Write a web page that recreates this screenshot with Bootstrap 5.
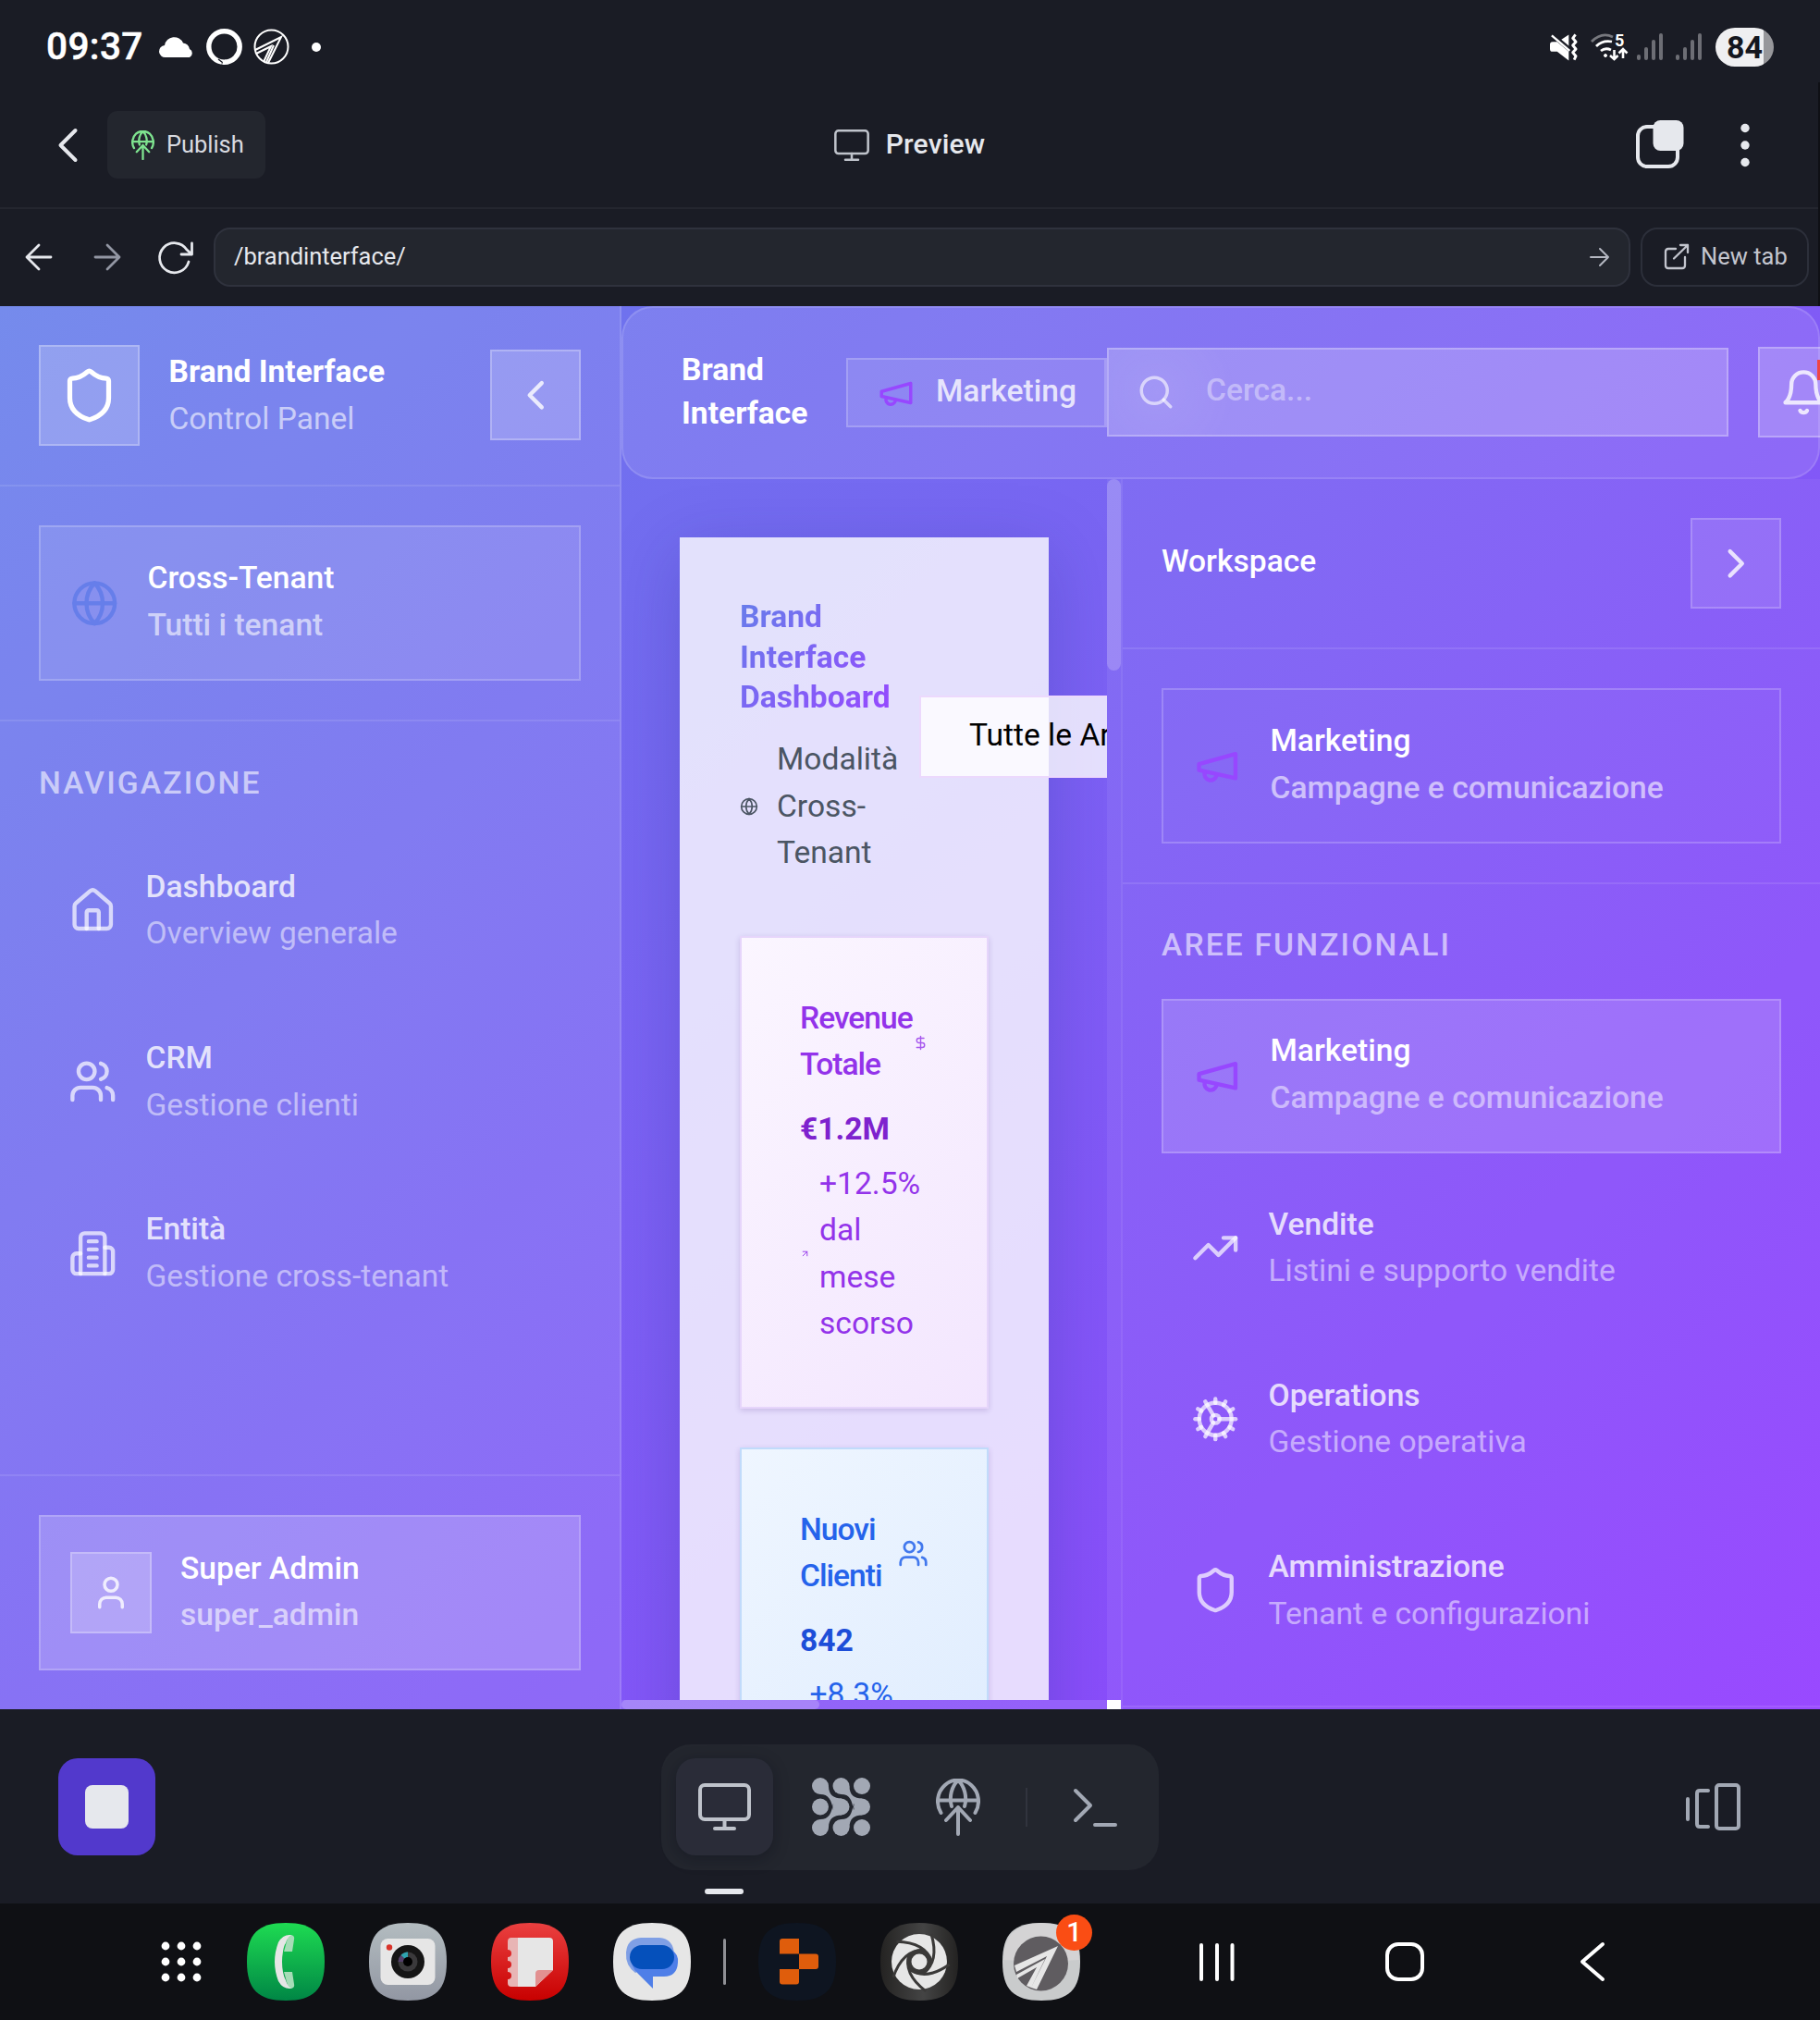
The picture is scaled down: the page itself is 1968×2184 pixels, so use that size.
<!DOCTYPE html>
<html lang="it">
<head>
<meta charset="utf-8">
<meta name="viewport" content="width=device-width, initial-scale=1">
<title>Brand Interface</title>
<link rel="stylesheet" href="https://cdn.jsdelivr.net/npm/bootstrap@5.3.0/dist/css/bootstrap.min.css">
<style>
  body { width: 1968px; height: 2184px; overflow: hidden; background: #1a1c25; color: #fff; font: 400 33.6px/50.4px Roboto, sans-serif; }
  svg { display: block; flex: none; overflow: visible; }
  .ln { fill: none; stroke: currentColor; stroke-width: 2; stroke-linecap: round; stroke-linejoin: round; }
  .i52 { width: 52.5px; height: 52.5px; }
  .i42 { width: 42px; height: 42px; }
  .fw-md { font-weight: 500; }

  /* device status bar */
  .status { height: 89px; padding: 12px 50px 0 50px; }
  .clock { font-size: 40.5px; font-weight: 500; letter-spacing: .4px; -webkit-text-stroke: .5px #fff; width: 107px; margin-right: 15px; white-space: nowrap; }
  .battery { width: 63px; height: 42px; border-radius: 21px; background: linear-gradient(90deg, #efeff1 83%, #97979b 83%); color: #14161e; font: 700 34px/42px Roboto, sans-serif; padding-left: 12px; }
  .ring { margin: 0 12px; }
  .sig-a { margin-left: 10px; }
  .sig-b { margin: 0 15px 0 14px; }

  /* application bars */
  .chrome { border-right: 2px solid #0f1015; color: #e6e8ed; }
  .titlebar { height: 137px; border-bottom: 2px solid #24262f; padding: 0 74px 0 62px; }
  .titlebar > div { flex: 1 1 0; }
  .publish { width: 171px; height: 73px; border-radius: 11px; background: #23262e; font-size: 25.5px; letter-spacing: -.05px; color: #d8dae0; margin-left: 32px; padding-left: 26px; gap: 13px; }
  .page-title { font-size: 30px; font-weight: 500; letter-spacing: .2px; gap: 18px; padding-left: 13px; }
  .addressbar { height: 105px; padding: 0 10px 2px 27px; font-size: 25.5px; }
  .url { height: 64px; border: 2px solid #2f323d; border-radius: 18px; background: #23262e; padding: 0 19px 0 20px; width: 1532px; margin-left: 22px; letter-spacing: -.05px; }
  .newtab { height: 64px; width: 182px; border: 2px solid #2c2f3a; border-radius: 18px; margin-left: 11px; padding-left: 24px; gap: 13px; color: #c3c5ce; }

  /* page shown in the preview */
  .site { height: 1517px; background: linear-gradient(135deg, #667eea 0%, #9440ff 100%); overflow: hidden; }
  .side-l { width: 672px; background: rgba(255,255,255,.1); border-right: 2px solid rgba(255,255,255,.13); }
  .sect { padding: 42px; border-bottom: 2px solid rgba(255,255,255,.1); }
  .glass { border: 2px solid rgba(255,255,255,.2); background: rgba(255,255,255,.1); }
  .glass-2 { border: 2px solid rgba(255,255,255,.25); background: rgba(255,255,255,.2); }
  .entry { height: 168.4px; padding: 0 31.5px; gap: 31.5px; }
  .boxed { border: 2px solid rgba(255,255,255,.2); }
  .boxed > .fw-md { margin-bottom: 3px; }
  .faint { background: rgba(255,255,255,.02); }
  .chosen { background: rgba(255,255,255,.15); height: 167px; margin-bottom: 1.4px; }
  .dim-5 { color: rgba(255,255,255,.5); }
  .dim-6 { color: rgba(255,255,255,.6); }
  .dim-7 { color: rgba(255,255,255,.7); }
  .dim-8 { color: rgba(255,255,255,.8); }
  .sq { width: 98px; height: 98px; }
  .c-mk { color: #9747ff; }
  .c-gl { color: #667eea; }
  .label-up { font-weight: 500; letter-spacing: 2.15px; color: rgba(255,255,255,.6); }
  .entries { gap: 16.8px; }
  .topbar { height: 187px; flex: none; background: rgba(255,255,255,.1); border: 2px solid rgba(255,255,255,.13); border-radius: 34px; padding-left: 63px; }
  .topbar > * { flex: none; }
  .topname { width: 178px; font-weight: 700; line-height: 46.8px; margin-bottom: 2px; }
  .chip { width: 282px; height: 75px; padding-left: 31px; gap: 22px; border-right-width: 3px; }
  .chip span, .search span { padding-bottom: 2px; }
  .search { width: 672px; height: 96px; margin-bottom: 2px; padding-left: 30px; gap: 33px; background: radial-gradient(circle 85px at 52px 50%, rgba(255,255,255,.06), transparent), rgba(255,255,255,.2); }
  .alert-dot { position: absolute; right: -14px; top: 12px; width: 46px; height: 22px; background: #ef4444; }

  .main-pane { width: 525px; height: 1320px; overflow: hidden; }
  .board { width: 399px; height: 1400px; margin: 63px 0 0 63px; padding: 64px 65px; background: rgba(255,255,255,.8); box-shadow: 0 17px 67px rgba(31,38,135,.25); }
  .board-title { font-size: 33.6px; line-height: 43.7px; font-weight: 700; margin: 0 0 20px; width: 163px; background: linear-gradient(135deg, #667eea, #9747ff); -webkit-background-clip: text; background-clip: text; color: transparent; }
  .pick { height: 89px; width: 420px; border: 2px solid #ecd9fd; background: rgba(255,255,255,.8); color: #000; padding: 0 0 2px 52px; white-space: nowrap; margin: 1px 0 0 -1px; }
  .stat { width: 269px; height: 511px; padding: 61.5px 63px; border: 2px solid #e6d5fb; background: linear-gradient(135deg, #fbf6ff, #f3e6fe); box-shadow: 0 2px 6px rgba(60,20,120,.18); color: #9333ea; }
  .stat-blue { border-color: #c1dbfb; background: linear-gradient(135deg, #eff6ff, #dbeafe); color: #2563eb; margin-top: 42px; }
  .stat h3 { font-size: 33.6px; line-height: 50.4px; font-weight: 500; letter-spacing: -1px; margin: 0; }
  .stat-num { font-weight: 700; margin-top: 19px; color: #7e22ce; }
  .stat-blue .stat-num { color: #1d4ed8; }
  .vtrack { width: 15px; height: 1320px; background: rgba(255,255,255,.06); }
  .vtrack div { height: 207px; border-radius: 8px; background: rgba(255,255,255,.2); }
  .htrack { height: 10px; width: 525px; background: rgba(255,255,255,.1); }
  .htrack div { height: 10px; width: 214px; border-radius: 5px; background: rgba(255,255,255,.2); }
  .side-r { width: 756px; height: 1330px; background: rgba(255,255,255,.05); border-left: 2px solid rgba(255,255,255,.08); }

  /* bottom tool strip */
  .tools { height: 210px; padding: 1px 86px 0 63px; color: #a2a8b4; }
  .stop { width: 105px; height: 105px; border-radius: 21px; background: #5239cc; }
  .stop div { width: 47px; height: 47px; border-radius: 8px; background: #e6e8ed; }
  .toolset { width: 538px; height: 136px; border-radius: 32px; background: #23262e; padding-left: 16px; margin-left: 547px; }
  .tool-on { width: 105px; height: 105px; border-radius: 21px; background: #2a2c38; box-shadow: 0 4px 16px rgba(10,12,22,.35); color: #bfc3cb; position: relative; }
  .tool-on::after { content: ""; position: absolute; left: 31px; top: 141px; width: 42px; height: 6px; border-radius: 3px; background: #e6e8ed; }
  .tool-sep { width: 2px; height: 42px; background: #31343e; margin: 0 49px; }

  .dock { height: 126px; background: #0f1014; padding-left: 174px; }
  .app { width: 84px; height: 84px; }
  .app + .app { margin-left: 48px; }
  .count { position: absolute; left: 58px; top: -9px; width: 39px; height: 39px; border-radius: 50%; background: #fa4d14; font: 500 29px/39px Roboto, sans-serif; text-align: center; }
</style>
<script src="https://cdn.jsdelivr.net/npm/bootstrap@5.3.0/dist/js/bootstrap.bundle.min.js"></script>
</head>
<body>
<svg width="0" height="0" class="position-absolute">
  <symbol id="shield" viewBox="0 0 24 24"><path d="M20 13c0 5-3.5 7.5-7.66 8.95a1 1 0 0 1-.67-.01C7.5 20.5 4 18 4 13V6a1 1 0 0 1 1-1c2 0 4.5-1.2 6.24-2.72a1.17 1.17 0 0 1 1.52 0C14.51 3.81 17 5 19 5a1 1 0 0 1 1 1z"/></symbol>
  <symbol id="left" viewBox="0 0 24 24"><path d="m15 18-6-6 6-6"/></symbol>
  <symbol id="right" viewBox="0 0 24 24"><path d="m9 18 6-6-6-6"/></symbol>
  <symbol id="globe" viewBox="0 0 24 24"><circle cx="12" cy="12" r="10"/><path d="M12 2a14.5 14.5 0 0 0 0 20 14.5 14.5 0 0 0 0-20M2 12h20"/></symbol>
  <symbol id="house" viewBox="0 0 24 24"><path d="M15 21v-8a1 1 0 0 0-1-1h-4a1 1 0 0 0-1 1v8"/><path d="M3 10a2 2 0 0 1 .709-1.528l7-5.999a2 2 0 0 1 2.582 0l7 5.999A2 2 0 0 1 21 10v9a2 2 0 0 1-2 2H5a2 2 0 0 1-2-2z"/></symbol>
  <symbol id="users" viewBox="0 0 24 24"><path d="M16 21v-2a4 4 0 0 0-4-4H6a4 4 0 0 0-4 4v2"/><circle cx="9" cy="7" r="4"/><path d="M22 21v-2a4 4 0 0 0-3-3.87M16 3.13a4 4 0 0 1 0 7.75"/></symbol>
  <symbol id="building" viewBox="0 0 24 24"><path d="M6 22V4a2 2 0 0 1 2-2h8a2 2 0 0 1 2 2v18Z"/><path d="M6 12H4a2 2 0 0 0-2 2v6a2 2 0 0 0 2 2h2"/><path d="M18 9h2a2 2 0 0 1 2 2v9a2 2 0 0 1-2 2h-2"/><path d="M10 6h4M10 10h4M10 14h4M10 18h4"/></symbol>
  <symbol id="user" viewBox="0 0 24 24"><path d="M19 21v-2a4 4 0 0 0-4-4H9a4 4 0 0 0-4 4v2"/><circle cx="12" cy="7" r="4"/></symbol>
  <symbol id="mega" viewBox="0 0 24 24"><path d="m3 11 18-5v12L3 14v-3z"/><path d="M11.6 16.8a3 3 0 1 1-5.8-1.6"/></symbol>
  <symbol id="search" viewBox="0 0 24 24"><circle cx="11" cy="11" r="8"/><path d="m21 21-4.3-4.3"/></symbol>
  <symbol id="bell" viewBox="0 0 24 24"><path d="M6 8a6 6 0 0 1 12 0c0 7 3 9 3 9H3s3-2 3-9"/><path d="M10.3 21a1.94 1.94 0 0 0 3.4 0"/></symbol>
  <symbol id="trend" viewBox="0 0 24 24"><path d="M22 7 13.5 15.5 8.5 10.5 2 17"/><path d="M16 7h6v6"/></symbol>
  <symbol id="cog" viewBox="0 0 24 24"><path d="M12 20a8 8 0 1 0 0-16 8 8 0 0 0 0 16Z"/><path d="M12 14a2 2 0 1 0 0-4 2 2 0 0 0 0 4Z"/><path d="M12 2v2"/><path d="M12 22v-2"/><path d="m17 20.66-1-1.73"/><path d="M11 10.27 7 3.34"/><path d="m20.66 17-1.73-1"/><path d="m3.34 7 1.73 1"/><path d="M14 12h8"/><path d="M2 12h2"/><path d="m20.66 7-1.73 1"/><path d="m3.34 17 1.73-1"/><path d="m17 3.34-1 1.73"/><path d="m11 13.73-4 6.93"/></symbol>
  <symbol id="globeup" viewBox="0 0 48 62"><path d="M5.500 37A22 23 0 1 1 42.500 37M2 23.500h44M17 30C14 20 17 8 24 2 31 8 34 20 31 30M24 60V31M11 45 24 31 37 45"/></symbol>
  <symbol id="monitor" viewBox="0 0 57 51"><rect x="2" y="2" width="53" height="37" rx="5"/><path d="M28.500 39v10M18 49h21"/></symbol>
</svg>

<header class="status d-flex align-items-center">
  <div class="clock">09:37</div>
  <svg width="39" height="24" viewBox="0 0 39 24" fill="#fff"><path d="M7 23a6.500 6.500 0 0 1-1-13A10.500 10.500 0 0 1 26 7.500 8 8 0 0 1 33 14a5 5 0 0 1 0 9Z"/></svg>
  <svg class="ring" width="39" height="39" viewBox="0 0 39 39"><circle cx="19.500" cy="19.500" r="16.700" fill="none" stroke="#fff" stroke-width="5.400"/><path d="M13 33l4.500 3.500V39" stroke="#1a1c25" stroke-width="1.500" fill="none"/><path d="M18 39q0-3 3.500-5" stroke="#fff" stroke-width="1.500" fill="none"/></svg>
  <svg width="39" height="39" viewBox="0 0 39 39" fill="none" stroke="#fff" stroke-width="2"><circle cx="19.500" cy="19.500" r="18"/><path d="M2 23 30 9 16 37M3 27l16-8-8 17M22 18l-8 18" /></svg>
  <svg class="ms-4" width="10" height="10"><circle cx="5" cy="5" r="5" fill="#fff"/></svg>
  <div class="ms-auto d-flex align-items-center">
    <svg width="30" height="30" viewBox="0 0 31 30"><path d="M0 12q0-3 3-3h5l13 11v10L8 20H3q-3 0-3-3ZM12 7l9-6v14Z" fill="#fff"/><path d="m2 2 20 17" stroke="#fff" stroke-width="2.500"/><path d="m6 2 17 14" stroke="#1a1c25" stroke-width="1.500"/><path d="m28.500 1-3 4 3.500 4-3.500 4 3.500 4-3.500 4 3.500 4-2 4" fill="none" stroke="#fff" stroke-width="3" stroke-linejoin="round"/></svg>
    <svg style="margin-left:14px" width="40" height="30" viewBox="0 0 40 30" fill="none" stroke="#fff" stroke-width="2.800"><path d="M1 9Q12-2 24 4" stroke="#77787e"/><path d="M6 14Q13 7 23 9M11 19q5-4 11-1"/><circle cx="16" cy="24" r="1.500" fill="#fff" stroke-width="1"/><path d="M25.500 18v10M21 24l4.500 4 4-4M35 27V17M30.500 21.500 35 17l4.500 4.500" stroke-width="2.600"/><text x="26" y="14" fill="#fff" stroke="none" font-family="Roboto" font-weight="700" font-size="18">5</text></svg>
    <svg class="sig-a" width="28" height="30" fill="#6d6e75"><rect y="23" width="4" height="6" rx="2"/><rect x="8" y="15" width="4" height="14" rx="2"/><rect x="16" y="7" width="4" height="22" rx="2"/><rect x="24" width="4" height="29" rx="2"/></svg>
    <svg class="sig-b" width="28" height="30" fill="#6d6e75"><rect y="23" width="4" height="6" rx="2"/><rect x="8" y="15" width="4" height="14" rx="2"/><rect x="16" y="7" width="4" height="22" rx="2"/><rect x="24" width="4" height="29" rx="2"/></svg>
    <div class="battery">84</div>
  </div>
</header>

<div class="chrome">
  <nav class="titlebar d-flex align-items-center">
    <div class="d-flex align-items-center">
      <svg width="22" height="36" viewBox="0 0 22 36" fill="none" stroke="#e6e8ed" stroke-width="4" stroke-linecap="round" stroke-linejoin="round"><path d="M19.500 2 3.500 18l16 16"/></svg>
      <div class="publish d-flex align-items-center">
        <svg class="ln" style="stroke-width:4.500;color:#7ee38f" width="25" height="32"><use href="#globeup"/></svg>
        <span>Publish</span>
      </div>
    </div>
    <div class="page-title d-flex align-items-center justify-content-center">
      <svg class="ln" style="stroke-width:3.800;color:#bfc3cb" width="38" height="34"><use href="#monitor"/></svg>
      <span>Preview</span>
    </div>
    <div class="d-flex align-items-center justify-content-end">
      <svg width="53" height="53" viewBox="0 0 53 53"><rect x="3" y="7" width="43" height="43" rx="10" fill="none" stroke="#e6e8ed" stroke-width="4"/><rect x="19.500" y="0" width="33" height="33" rx="8" fill="#e6e8ed"/></svg>
      <svg style="margin-left:61px" width="10" height="48" fill="#e6e8ed"><circle cx="5" cy="5.500" r="4.700"/><circle cx="5" cy="24" r="4.700"/><circle cx="5" cy="42.500" r="4.700"/></svg>
    </div>
  </nav>
  <div class="addressbar d-flex align-items-center">
    <svg class="ln" width="30" height="28" viewBox="0 0 30 28" style="stroke-width:2.800"><path d="M15 1 2 14l13 13M2 14h26"/></svg>
    <svg class="ln" width="30" height="28" viewBox="0 0 30 28" style="stroke-width:2.800;color:#9296a3;margin-left:44px"><path d="m15 1 13 13-13 13M28 14H2"/></svg>
    <svg class="ln" width="38" height="36" viewBox="0 0 38 36" style="stroke-width:2.800;margin-left:40px"><path d="M33 23A16 16 0 1 1 31 10l5.500 5M36.500 3v12H25"/></svg>
    <div class="url d-flex align-items-center justify-content-between">
      <span>/brandinterface/</span>
      <svg class="ln" width="23" height="22" viewBox="0 0 23 22" style="color:#b4b7c1"><path d="m11 2 9 9-9 9M20 11H1"/></svg>
    </div>
    <div class="newtab d-flex align-items-center">
      <svg class="ln" width="26" height="27" viewBox="0 0 26 27" style="stroke-width:2.300"><path d="M12 5H4Q1 5 1 8v15q0 3 3 3h15q3 0 3-3v-9M10 15.500 25 1M17 1h8v8"/></svg>
      <span>New tab</span>
    </div>
  </div>
</div>

<div class="site d-flex">
  <aside class="side-l d-flex flex-column flex-shrink-0">
    <div class="sect d-flex align-items-center">
      <div class="glass-2 d-flex align-items-center justify-content-center" style="width:109px;height:109px"><svg class="ln" width="63" height="63"><use href="#shield"/></svg></div>
      <div style="margin-left:31.500px">
        <div class="fw-bold">Brand Interface</div>
        <div class="dim-6">Control Panel</div>
      </div>
      <div class="glass-2 sq ms-auto d-flex align-items-center justify-content-center dim-8" style="margin-bottom:1px"><svg class="ln i52"><use href="#left"/></svg></div>
    </div>
    <div class="sect">
      <div class="entry boxed glass d-flex align-items-center">
        <svg class="ln i52 c-gl"><use href="#globe"/></svg>
        <div class="fw-md"><div>Cross-Tenant</div><div class="dim-6">Tutti i tenant</div></div>
      </div>
    </div>
    <div class="flex-grow-1" style="padding:41.500px 42px 0">
      <div class="label-up" style="margin-bottom:28px">NAVIGAZIONE</div>
      <div class="entries d-flex flex-column">
        <div class="entry d-flex align-items-center"><svg class="ln i52 dim-7"><use href="#house"/></svg><div><div class="fw-md dim-8">Dashboard</div><div class="dim-5">Overview generale</div></div></div>
        <div class="entry d-flex align-items-center"><svg class="ln i52 dim-7"><use href="#users"/></svg><div><div class="fw-md dim-8">CRM</div><div class="dim-5">Gestione clienti</div></div></div>
        <div class="entry d-flex align-items-center"><svg class="ln i52 dim-7"><use href="#building"/></svg><div><div class="fw-md dim-8">Entità</div><div class="dim-5">Gestione cross-tenant</div></div></div>
      </div>
    </div>
    <div class="sect border-bottom-0" style="border-top:2px solid rgba(255,255,255,.1)">
      <div class="entry boxed glass-2 d-flex align-items-center">
        <div class="glass-2 d-flex align-items-center justify-content-center dim-8" style="width:88px;height:88px"><svg class="ln i42"><use href="#user"/></svg></div>
        <div class="fw-md" style="margin-bottom:1px"><div>Super Admin</div><div class="dim-6">super_admin</div></div>
      </div>
    </div>
  </aside>

  <div class="d-flex flex-column flex-shrink-0" style="width:1296px">
    <div class="topbar d-flex align-items-center">
      <div class="topname">Brand<br>Interface</div>
      <div class="chip glass d-flex align-items-center fw-md dim-8"><svg class="ln i42 c-mk"><use href="#mega"/></svg><span>Marketing</span></div>
      <div class="search glass-2 d-flex align-items-center fw-md"><svg class="ln i42 dim-6"><use href="#search"/></svg><span style="color:rgba(255,255,255,.4)">Cerca...</span></div>
      <div class="glass-2 sq d-flex align-items-center justify-content-center position-relative dim-8" style="margin:0 0 1px 32px"><svg class="ln i52"><use href="#bell"/></svg><div class="alert-dot"></div></div>
    </div>
    <div class="d-flex">
      <div>
        <div class="main-pane">
          <div class="board">
            <div class="d-flex align-items-center" style="margin-bottom:65px">
              <div class="flex-shrink-0" style="width:195px">
                <h1 class="board-title">Brand<br>Interface<br>Dashboard</h1>
                <div class="d-flex align-items-center" style="color:#4b5563;gap:20px"><svg class="ln" width="20" height="20"><use href="#globe"/></svg><div>Modalità<br>Cross-<br>Tenant</div></div>
              </div>
              <div class="pick d-flex align-items-center flex-shrink-0">Tutte le Aree</div>
            </div>
            <div class="stat">
              <div class="d-flex align-items-center">
                <h3>Revenue<br>Totale</h3>
                <svg class="ln ms-auto" style="margin-right:5px;margin-top:3px;opacity:.8" width="17" height="17" viewBox="0 0 24 24"><path d="M12 2v20M17 5H9.500a3.500 3.500 0 0 0 0 7h5a3.500 3.500 0 0 1 0 7H6"/></svg>
              </div>
              <div class="stat-num">€1.2M</div>
              <div class="d-flex align-items-center" style="margin-top:9px;gap:10px"><svg class="ln" width="11" height="11" viewBox="0 0 24 24"><path d="M7 7h10v10M7 17 17 7"/></svg><div>+12.5%<br>dal<br>mese<br>scorso</div></div>
            </div>
            <div class="stat stat-blue">
              <div class="d-flex align-items-center">
                <h3>Nuovi<br>Clienti</h3>
                <svg class="ln ms-auto" style="opacity:.85" width="33" height="33"><use href="#users"/></svg>
              </div>
              <div class="stat-num">842</div>
              <div style="margin:8px 0 0 10.500px">+8.3%</div>
            </div>
          </div>
        </div>
        <div class="htrack"><div></div></div>
      </div>
      <div>
        <div class="vtrack"><div></div></div>
        <div class="bg-white" style="height:10px"></div>
      </div>
      <aside class="side-r">
        <div class="sect d-flex align-items-center justify-content-between">
          <div class="fw-md" style="margin-bottom:3px">Workspace</div>
          <div class="glass sq d-flex align-items-center justify-content-center dim-8"><svg class="ln i52"><use href="#right"/></svg></div>
        </div>
        <div class="sect">
          <div class="entry boxed faint d-flex align-items-center">
            <svg class="ln i52 c-mk"><use href="#mega"/></svg>
            <div class="fw-md"><div>Marketing</div><div class="dim-6">Campagne e comunicazione</div></div>
          </div>
        </div>
        <div style="padding:41px 42px 0;height:890px;border-bottom:2px solid rgba(255,255,255,.1)">
          <div class="label-up" style="margin-bottom:32px">AREE FUNZIONALI</div>
          <div class="entries d-flex flex-column">
            <div class="entry boxed chosen d-flex align-items-center"><svg class="ln i52 c-mk"><use href="#mega"/></svg><div class="fw-md"><div>Marketing</div><div class="dim-5">Campagne e comunicazione</div></div></div>
            <div class="entry d-flex align-items-center"><svg class="ln i52 dim-7"><use href="#trend"/></svg><div><div class="fw-md dim-8">Vendite</div><div class="dim-5">Listini e supporto vendite</div></div></div>
            <div class="entry d-flex align-items-center"><svg class="ln i52 dim-7"><use href="#cog"/></svg><div><div class="fw-md dim-8">Operations</div><div class="dim-5">Gestione operativa</div></div></div>
            <div class="entry d-flex align-items-center"><svg class="ln i52 dim-7"><use href="#shield"/></svg><div><div class="fw-md dim-8">Amministrazione</div><div class="dim-5">Tenant e configurazioni</div></div></div>
          </div>
        </div>
      </aside>
    </div>
  </div>
</div>

<div class="tools d-flex align-items-center">
  <div class="stop d-flex align-items-center justify-content-center"><div></div></div>
  <div class="toolset d-flex align-items-center">
    <div class="tool-on d-flex align-items-center justify-content-center"><svg class="ln" style="stroke-width:4" width="57" height="51"><use href="#monitor"/></svg></div>
    <svg style="margin-left:42px" width="63" height="63" viewBox="0 0 63 63" fill="#a2a8b4">
      <circle cx="9" cy="9" r="9"/><circle cx="31.500" cy="9" r="9"/><circle cx="54" cy="9" r="9"/><circle cx="9" cy="31.500" r="9"/><circle cx="31.500" cy="31.500" r="9"/><circle cx="54" cy="31.500" r="9"/><circle cx="9" cy="54" r="9"/><circle cx="31.500" cy="54" r="9"/><circle cx="54" cy="54" r="9"/>
      <path d="M18 9C18 19 24 22.500 32 22.500L23 35C21 24 18 18 9 18ZM40.500 9C40.500 19 46 22.500 54 22.500L45 35C43 24 41 18 31.500 18ZM18 54C18 44 24 40.500 32 40.500L23 28C21 39 18 45 9 45ZM40.500 54C40.500 44 46 40.500 54 40.500L45 28C43 39 41 45 31.500 45Z"/>
    </svg>
    <svg class="ln" style="stroke-width:4;margin-left:71px" width="48" height="62"><use href="#globeup"/></svg>
    <div class="tool-sep"></div>
    <svg class="ln" style="stroke-width:4" width="48" height="42" viewBox="0 0 48 42"><path d="m3 3 16 16L3 35M24 40h22"/></svg>
  </div>
  <svg class="ln ms-auto" style="stroke-width:4" width="59" height="51" viewBox="0 0 59 51"><path d="M2 17v22M24 8h-9q-3 0-3 3v33q0 3 3 3h9"/><rect x="33" y="2" width="24" height="47" rx="3"/></svg>
</div>

<footer class="dock d-flex align-items-center">
  <svg width="43" height="44" fill="#fff"><g id="g3"><circle cx="5" cy="5" r="4.400"/><circle cx="22" cy="5" r="4.400"/><circle cx="39" cy="5" r="4.400"/></g><use href="#g3" y="17"/><use href="#g3" y="34"/></svg>
  <svg class="app" style="margin-left:50px" viewBox="0 0 84 84"><defs><path id="sq" d="M42 0C72 0 84 12 84 42S72 84 42 84 0 72 0 42 12 0 42 0Z"/><linearGradient id="a1" x2="0" y2="1"><stop stop-color="#1edb52"/><stop offset="1" stop-color="#008645"/></linearGradient><linearGradient id="a2" x2="0" y2="1"><stop stop-color="#b3bcc0"/><stop offset="1" stop-color="#9297a3"/></linearGradient><linearGradient id="a3" x2="0" y2="1"><stop stop-color="#ea4040"/><stop offset="1" stop-color="#c80000"/></linearGradient><linearGradient id="a4"><stop stop-color="#242322"/><stop offset=".55" stop-color="#444"/><stop offset="1" stop-color="#242322"/></linearGradient></defs><use href="#sq" fill="url(#a1)"/><path d="M48 13q4 1 3 5l-2 13h-9L45 13ZM48 71q4-1 3-5l-2-13h-9L45 71Z" fill="#a6dcb7"/><path d="M48 13Q39 12 34 21 26 42 34 63q5 9 14 8-4-2-6-9-2-3-3-9-2-11 0-22 1-7 3-9 2-7 6-9Z" fill="#e6e6e6"/></svg>
  <svg class="app" viewBox="0 0 84 84"><use href="#sq" fill="url(#a2)"/><rect x="12.500" y="17" width="59" height="50" rx="8" fill="#e6e6e6"/><circle cx="42" cy="42" r="18" fill="#151515"/><circle cx="42" cy="42" r="10.500" fill="#3a393b"/><path d="M42 42V31.500A10.500 10.500 0 0 0 34.500 35Z" fill="#2fa3b0"/><path d="M42 42l-7.500-7A10.500 10.500 0 0 0 31.500 42Z" fill="#54406b"/><circle cx="42" cy="42" r="5" fill="#000"/><circle cx="22" cy="26.500" r="3.200" fill="#d9342b"/></svg>
  <svg class="app" viewBox="0 0 84 84"><use href="#sq" fill="url(#a3)"/><path d="M18 20q0-4 4-4h7v53h-7q-4 0-4-4v-4a4 4 0 0 0 0-8v-4a4 4 0 0 0 0-8v-4a4 4 0 0 0 0-8Z" fill="#e8b5b5"/><path d="M29 16h34q4 0 4 4v31L48 69H29Z" fill="#e6e6e6"/><path d="M48 69V55q0-4 4-4h15Z" fill="#e29191"/></svg>
  <svg class="app" viewBox="0 0 84 84"><use href="#sq" fill="#e6e6e6"/><path d="M30 16h20q15 1 16 18L24 54Q13 46 14 32 15 17 30 16Z" fill="#7f9fe5"/><path d="M22 30h42q7 4 6 13-1 15-15 15H43V71L27 55Q18 46 20 38Z" fill="#4f7fe8"/><rect x="18" y="24" width="48" height="26" rx="13" fill="#0550bb"/></svg>
  <div style="width:3px;height:50px;border-radius:2px;background:#8f9095;margin:0 35px"></div>
  <svg class="app" viewBox="0 0 84 84"><use href="#sq" fill="#0e1521"/><path d="M26 17h18v16.500H23V20q0-3 3-3ZM44 33.500h18q3 0 3 3V47q0 3-3 3H44ZM23 50h21v13.500q0 3-3 3H26q-3 0-3-3Z" fill="#df5d0c"/></svg>
  <svg class="app" viewBox="0 0 84 84"><use href="#sq" fill="url(#a4)"/><circle cx="42" cy="42" r="30" fill="#e6e6e6"/><g fill="none" stroke="#3a3938" stroke-width="3"><circle cx="42" cy="42" r="11" stroke-width="5"/><path id="sw" d="M55 12Q64 42 46 55"/><use href="#sw" transform="rotate(72 42 42)"/><use href="#sw" transform="rotate(144 42 42)"/><use href="#sw" transform="rotate(216 42 42)"/><use href="#sw" transform="rotate(288 42 42)"/></g></svg>
  <div class="position-relative" style="margin-left:48px"><svg class="app" viewBox="0 0 84 84"><use href="#sq" fill="#c9cbcc"/><path d="M1 40Q1 1 42 0q41 1 41 40-41 3-82 0Z" fill="#d4d3d4"/><circle cx="41.500" cy="44" r="29.500" fill="#5f5c60"/><path d="M13 46 60 25 37 72l-6-2 17-34L15 53ZM15 56 46 39 31 70l-5-2 11-20-21 12Z" fill="#e6e6e6"/></svg><div class="count">1</div></div>
  <svg style="margin-left:129px" width="38" height="41" fill="#fff"><rect width="4" height="41" rx="2"/><rect x="17" width="4" height="41" rx="2"/><rect x="33.500" width="4" height="41" rx="2"/></svg>
  <svg style="margin-left:163px" width="42" height="42"><rect x="2" y="2" width="38" height="38" rx="12" fill="none" stroke="#fff" stroke-width="4"/></svg>
  <svg style="margin-left:168px" width="28" height="42" viewBox="0 0 28 42" fill="none" stroke="#fff" stroke-width="4" stroke-linecap="round" stroke-linejoin="round"><path d="M25 2 3 21l22 19"/></svg>
</footer>
</body>
</html>
